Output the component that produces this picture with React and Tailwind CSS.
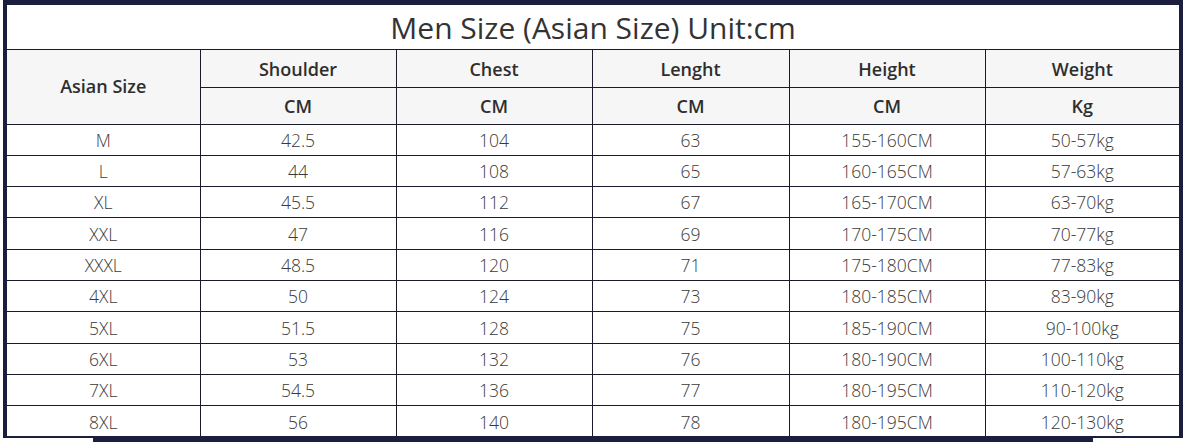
import React from 'react';

const rows = [
  ['M', '42.5', '104', '63', '155-160CM', '50-57kg'],
  ['L', '44', '108', '65', '160-165CM', '57-63kg'],
  ['XL', '45.5', '112', '67', '165-170CM', '63-70kg'],
  ['XXL', '47', '116', '69', '170-175CM', '70-77kg'],
  ['XXXL', '48.5', '120', '71', '175-180CM', '77-83kg'],
  ['4XL', '50', '124', '73', '180-185CM', '83-90kg'],
  ['5XL', '51.5', '128', '75', '185-190CM', '90-100kg'],
  ['6XL', '53', '132', '76', '180-190CM', '100-110kg'],
  ['7XL', '54.5', '136', '77', '180-195CM', '110-120kg'],
  ['8XL', '56', '140', '78', '180-195CM', '120-130kg'],
];

const heads = [
  ['Shoulder', 'CM'],
  ['Chest', 'CM'],
  ['Lenght', 'CM'],
  ['Height', 'CM'],
  ['Weight', 'Kg'],
];

const line = 'border border-[#1a1a2c]';

const App = () => {
  return (
    <div className="w-[1186px] h-[442px] bg-white overflow-hidden" style={{ fontFamily: '"Open Sans", sans-serif' }}>
      <div className="ml-[3px] w-[1180px] h-[438px] border-l-4 border-r-4 border-t-[5px] border-b-2 border-[#1b1e3d] overflow-hidden">
        <table className="w-[1172px] table-fixed border-collapse text-[#3a3a3a]">
          <colgroup>
            <col className="w-[193px]" />
            <col className="w-[196px]" />
            <col className="w-[196px]" />
            <col className="w-[197px]" />
            <col className="w-[196px]" />
            <col className="w-[194px]" />
          </colgroup>
          <thead>
            <tr className="h-[44px]">
              <th colSpan={6} className="border-b border-[#1a1a2c] text-[30px] font-normal text-[#333] leading-none pt-[2px]">
                Men Size (Asian Size) Unit:cm
              </th>
            </tr>
            <tr className="h-[38px] bg-[#f6f6f6]">
              <th rowSpan={2} className={`${line} border-l-0 text-[18px] font-semibold text-[#2e2e2e]`}>Asian Size</th>
              {heads.map(([h]) => (
                <th key={h} className={`${line} text-[18px] font-semibold text-[#2e2e2e] pt-[3px] last:border-r-0`}>{h}</th>
              ))}
            </tr>
            <tr className="h-[37px] bg-[#f6f6f6]">
              {heads.map(([h, u]) => (
                <th key={h} className={`${line} text-[18px] font-semibold text-[#2e2e2e] pt-[1px] last:border-r-0`}>{u}</th>
              ))}
            </tr>
          </thead>
          <tbody>
            {rows.map((r, i) => (
              <tr key={r[0]} className="h-[31.3px]">
                {r.map((c, j) => (
                  <td
                    key={j}
                    className={`${line} text-center text-[17.5px] font-light leading-none pt-[2px] first:border-l-0 last:border-r-0 ${i === rows.length - 1 ? 'border-b-0' : ''}`}
                  >
                    {c}
                  </td>
                ))}
              </tr>
            ))}
          </tbody>
        </table>
      </div>
      <div className="ml-[93px] w-[1000px] h-[4px] bg-[#1b1e3d]" />
    </div>
  );
};

export default App;
